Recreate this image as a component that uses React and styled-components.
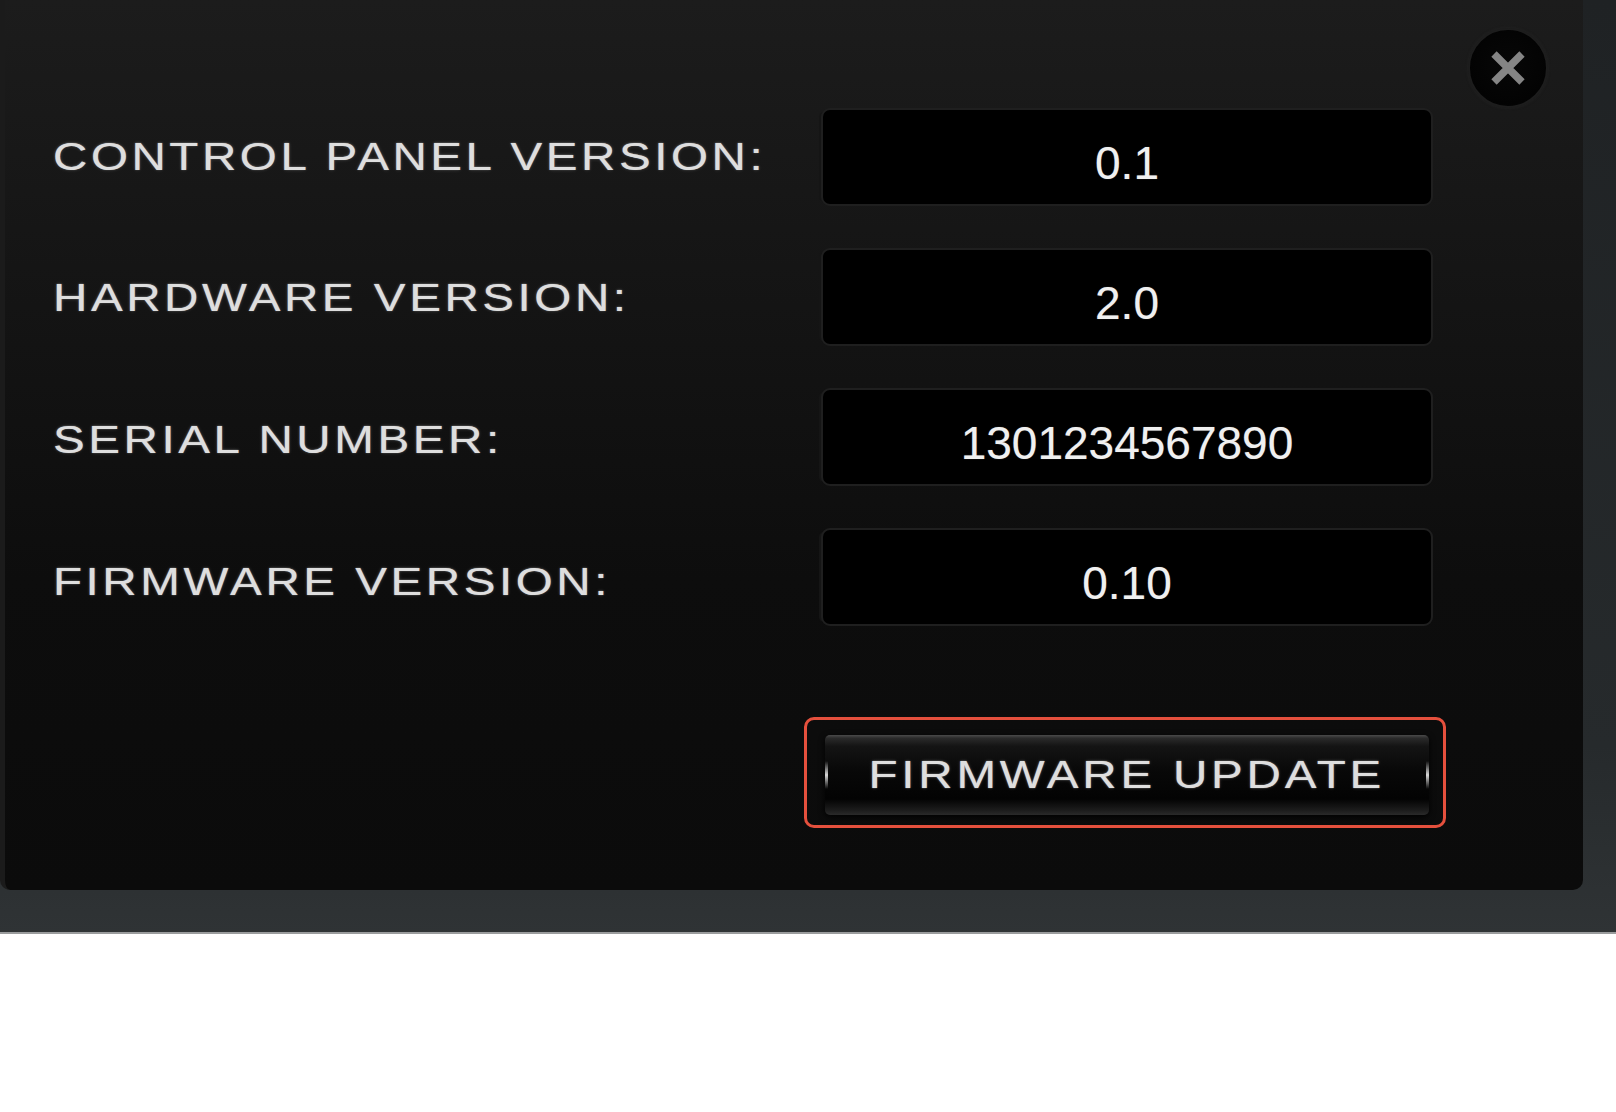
import React from 'react';
import styled, { createGlobalStyle } from 'styled-components';

const GlobalStyle = createGlobalStyle`
  html, body {
    margin: 0;
    padding: 0;
    background: #ffffff;
  }
`;

// Outer grey frame around the dialog (right and bottom strips)
const Frame = styled.div`
  width: 1616px;
  height: 934px;
  box-sizing: border-box;
  padding: 0 33px 42px 0;
  background: linear-gradient(180deg, #1f2224 0%, #262a2c 80%, #2f3335 100%);
  border-bottom: 2px solid #9a9c9d;
`;

const Panel = styled.div`
  width: 1583px;
  height: 890px;
  box-sizing: border-box;
  border-left: 5px solid #1b1b1b;
  border-radius: 0 0 10px 10px;
  padding-left: 48px;
  background: linear-gradient(180deg, #1c1c1c 0%, #151515 30%, #0d0d0d 65%, #0b0b0b 100%);
  display: flex;
  flex-direction: column;
`;

const TopBar = styled.div`
  height: 108px;
  box-sizing: border-box;
  padding: 28px 35px 0 0;
  display: flex;
  justify-content: flex-end;
`;

const CloseButton = styled.button`
  width: 80px;
  height: 80px;
  padding: 0;
  border-radius: 50%;
  border: 2px solid #1d1d1d;
  background: radial-gradient(circle at 50% 45%, #070707 0%, #030303 70%, #0c0c0c 100%);
  box-shadow: 0 0 3px #262626;
  display: flex;
  align-items: center;
  justify-content: center;
  cursor: pointer;
`;

const Rows = styled.div`
  display: flex;
  flex-direction: column;
  gap: 42px;
`;

const Row = styled.div`
  display: grid;
  grid-template-columns: 768px 612px;
  align-items: center;
`;

// Extended metallic caption type
const Caps = styled.span`
  display: inline-block;
  font-family: "Liberation Sans", Arial, sans-serif;
  font-size: 39px;
  letter-spacing: ${(p) => p.$spacing || 2.9}px;
  color: #dedede;
  text-shadow: 0 0 1px rgba(255, 255, 255, 0.6), 0 0 3px rgba(255, 255, 255, 0.25), 0 1px 1px rgba(0, 0, 0, 0.8);
  white-space: nowrap;
  transform: scaleX(1.22);
  transform-origin: ${(p) => p.$origin || 'left center'};
`;

const Label = styled.div`
  padding-top: ${(p) => p.$offset || 0}px;
`;

const ValueBox = styled.div`
  height: 98px;
  box-sizing: border-box;
  background: #000;
  border: 2px solid #1f1f1f;
  border-radius: 9px;
  box-shadow: -6px 0 0 -4px #151515;
  display: flex;
  align-items: center;
  justify-content: center;
  padding-top: 12px;
  font-family: "Liberation Sans", Arial, sans-serif;
  font-size: 46px;
  color: #f0f0f0;
  text-shadow: 0 0 1px rgba(255, 255, 255, 0.4);
`;

const ButtonRow = styled.div`
  display: grid;
  grid-template-columns: 768px 612px;
  margin-top: 91px;
`;

const Highlight = styled.div`
  grid-column: 2;
  margin-left: -17px;
  width: 642px;
  box-sizing: border-box;
  border: 3px solid #e5503d;
  border-radius: 10px;
  padding: 15px 14px 10px 18px;
`;

const UpdateButton = styled.button`
  position: relative;
  width: 604px;
  height: 80px;
  padding: 0;
  border: none;
  border-radius: 5px;
  background: linear-gradient(180deg, #4a4a4a 0%, #2a2a2a 4%, #141414 14%, #080808 45%, #030303 80%, #1c1c1c 94%, #2a2a2a 100%);
  box-shadow: 0 2px 6px rgba(0, 0, 0, 0.9);
  display: flex;
  align-items: center;
  justify-content: center;
  cursor: pointer;

  &::before,
  &::after {
    content: '';
    position: absolute;
    top: 26px;
    width: 3px;
    height: 28px;
    background: linear-gradient(180deg, rgba(255,255,255,0) 0%, #d8d8d8 50%, rgba(255,255,255,0) 100%);
  }

  &::before {
    left: 0;
  }

  &::after {
    right: 0;
  }
`;

const CloseIcon = () => (
  <svg width="38" height="34" viewBox="0 0 38 34">
    <path d="M5 3 L33 31 M33 3 L5 31" stroke="#858585" strokeWidth="7.5" strokeLinecap="butt" fill="none" />
  </svg>
);

const rows = [
  { label: 'CONTROL PANEL VERSION:', value: '0.1', offset: 0 },
  { label: 'HARDWARE VERSION:', value: '2.0', offset: 2 },
  { label: 'SERIAL NUMBER:', value: '1301234567890', offset: 6 },
  { label: 'FIRMWARE VERSION:', value: '0.10', offset: 10 },
];

const App = () => {
  return (
    <>
      <GlobalStyle />
      <Frame>
        <Panel>
          <TopBar>
            <CloseButton aria-label="Close">
              <CloseIcon />
            </CloseButton>
          </TopBar>
          <Rows>
            {rows.map((row) => (
              <Row key={row.label}>
                <Label $offset={row.offset}>
                  <Caps>{row.label}</Caps>
                </Label>
                <ValueBox>{row.value}</ValueBox>
              </Row>
            ))}
          </Rows>
          <ButtonRow>
            <Highlight>
              <UpdateButton type="button">
                <Caps $spacing={3.1} $origin="center">FIRMWARE UPDATE</Caps>
              </UpdateButton>
            </Highlight>
          </ButtonRow>
        </Panel>
      </Frame>
    </>
  );
};

export default App;
